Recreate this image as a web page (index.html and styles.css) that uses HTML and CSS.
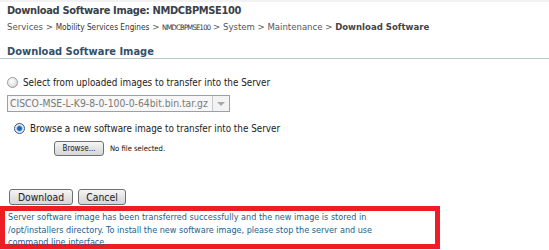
FILE: index.html
```html
<!DOCTYPE html>
<html>
<head>
<meta charset="utf-8">
<link rel="stylesheet" href="styles.css">
</head>
<body>
<div class="topline"></div>
<div class="header">
  <h1 class="title">Download Software Image: NMDCBPMSE100</h1>
  <div class="crumbs"><span>Services</span> <span class="sep">&gt;</span> <span class="tiny">Mobility Services Engines</span> <span class="sep">&gt;</span> <span class="tiny caps">NMDCBPMSE100</span> <span class="sep">&gt;</span> <span>System</span> <span class="sep">&gt;</span> <span>Maintenance</span> <span class="sep">&gt;</span> <b>Download Software</b></div>
</div>
<h2 class="section">Download Software Image</h2>
<div class="form">
  <div class="option"><span class="radio"></span><span>Select from uploaded images to transfer into the Server</span></div>
  <div class="select"><span class="select-text">CISCO-MSE-L-K9-8-0-100-0-64bit.bin.tar.gz</span><span class="select-btn"><span class="tri"></span></span></div>
  <div class="option option2"><span class="radio checked"></span><span>Browse a new software image to transfer into the Server</span></div>
  <div class="file"><span class="btn small">Browse...</span><span class="nofile">No file selected.</span></div>
  <div class="actions"><span class="btn">Download</span><span class="btn">Cancel</span></div>
</div>
<div class="message">Server software image has been transferred successfully and the new image is stored in<br>/opt/installers directory. To install the new software image, please stop the server and use<br>command line interface.</div>
</body>
</html>
```
FILE: styles.css
```css
html, body { margin: 0; padding: 0; background: #fff; }
body { font-family: "DejaVu Sans Condensed", "DejaVu Sans", sans-serif; font-size: 10px; color: #222; width: 549px; height: 250px; overflow: hidden; }
.topline { height: 2px; background: #f2f2f2; }
.header { padding: 1px 7px 0; }
.title { margin: 0; font-size: 11px; font-weight: bold; color: #3a4148; line-height: 16px; letter-spacing: -0.35px; }
.crumbs { margin-top: 2px; font-size: 9.5px; color: #555; line-height: 12px; white-space: nowrap; }
.crumbs .tiny { font-size: 8.2px; color: #333; }
.crumbs .caps { font-size: 7.5px; letter-spacing: -0.7px; }
.crumbs b { color: #444; font-weight: bold; }
.section { margin: 11px 0 0; padding: 0 7px; font-size: 11px; font-weight: bold; color: #34506b; border-bottom: 1px solid #b7c8cf; line-height: 13px; }
.form { padding: 0 7px; }
.option { display: flex; align-items: center; gap: 5px; margin-top: 17px; font-size: 9.8px; color: #222; height: 12px; }
.option2 { margin-top: 10px; padding-left: 7px; }
.radio { width: 11px; height: 11px; border-radius: 50%; border: 1px solid #999; background: radial-gradient(circle at 40% 35%, #fff 0, #e4e4e4 60%, #c8c8c8 100%); box-sizing: border-box; flex: none; }
.radio.checked { border-color: #2b5a8a; background: radial-gradient(circle, #1c66c8 0, #1a5fb5 28%, #6aa2dc 40%, #f2f2f2 55%, #d6d6d6 100%); }
.select { display: flex; width: 223px; height: 17px; border: 1px solid #9aa0a6; box-sizing: border-box; margin-top: 7px; background: #f7f7f7; }
.select-text { flex: 1; padding-left: 2px; line-height: 15px; font-size: 10.3px; color: #7a7a7a; white-space: nowrap; overflow: hidden; }
.select-btn { width: 16px; border-left: 1px solid #c8c8c8; display: flex; align-items: center; justify-content: center; background: #f3f3f3; }
.tri { width: 0; height: 0; border-left: 4px solid transparent; border-right: 4px solid transparent; border-top: 4px solid #a8a8a8; }
.file { display: flex; align-items: center; gap: 6px; margin-top: 7px; padding-left: 47px; }
.btn { display: inline-flex; align-items: center; justify-content: center; border: 1px solid #707070; border-radius: 3px; background: linear-gradient(#f6f6f6, #e4e4e4 50%, #d6d6d6); font-size: 10.3px; color: #222; height: 16px; box-sizing: border-box; padding: 0 8px; }
.btn.small { font-size: 8px; width: 50px; height: 15px; padding: 0; }
.nofile { font-size: 7.6px; color: #111; }
.actions { display: flex; gap: 5px; margin-top: 33px; padding-left: 2px; }
.actions .btn:first-child { width: 64px; }
.actions .btn:last-child { width: 48px; }
.message { margin-top: 1px; width: 440px; box-sizing: border-box; border: 5px solid #ee1c25; padding: 0 3px; font-size: 9px; line-height: 12.5px; color: #1b5f8c; height: 43px; white-space: nowrap; }
```
